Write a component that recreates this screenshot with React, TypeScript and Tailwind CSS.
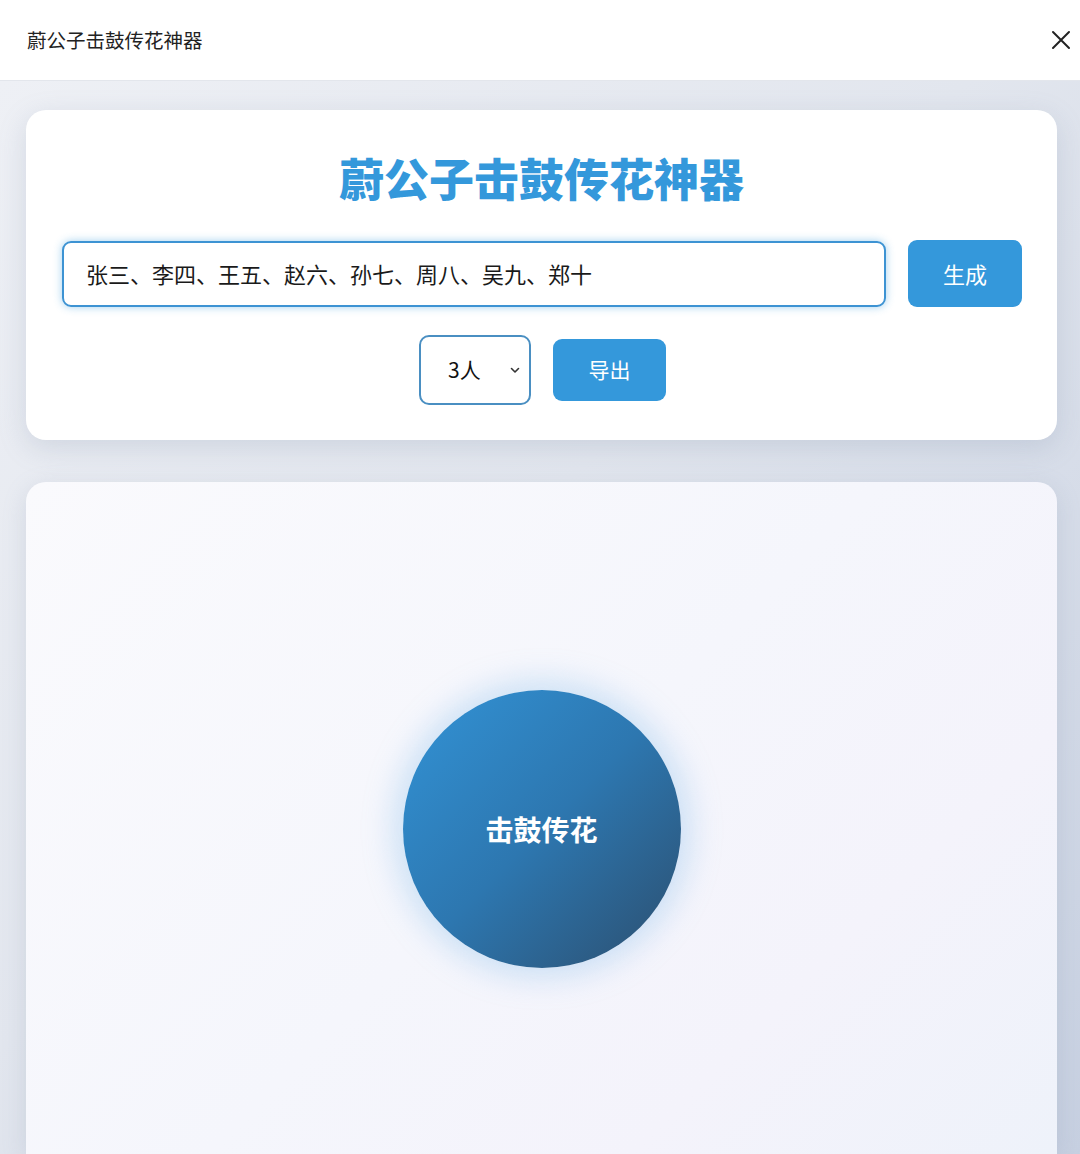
import React from "react";

const FONT = "font-['Microsoft_YaHei','Noto_Sans_CJK_SC','Noto_Sans',sans-serif]";

export default function App() {
  return (
    <div className={`w-[1080px] h-[1154px] overflow-hidden flex flex-col ${FONT}`}>
      <header className="h-[81px] shrink-0 bg-white border-b border-[#e3e6ec] flex items-center justify-between pl-[27px] pr-[8px]">
        <span className="text-[19.5px] text-[#222]">蔚公子击鼓传花神器</span>
        <svg width="22" height="22" viewBox="0 0 22 22" fill="none" stroke="#222" strokeWidth="2" strokeLinecap="round">
          <path d="M3 3 L19 19 M19 3 L3 19" />
        </svg>
      </header>
      <main className="flex-1 bg-[linear-gradient(135deg,#eef0f5_0%,#e2e6ee_45%,#c7d0e1_100%)] pl-[26px] pr-[23px] pt-[29px] flex flex-col gap-[42px]">
        <section className="h-[330px] bg-white rounded-[20px] shadow-[0_8px_28px_rgba(120,135,165,0.22)] flex flex-col items-center pt-[46px]">
          <h1 className="text-[45px] leading-[44px] font-extrabold text-[#3498db]">蔚公子击鼓传花神器</h1>
          <div className="mt-[40px] w-full flex items-center pl-[36px] pr-[35px] gap-[22px]">
            <div className="flex-1 h-[66px] rounded-[9px] border-2 border-[#3d93d3] shadow-[0_0_8px_rgba(52,152,219,0.45)] flex items-center pl-[22px] text-[22px] text-[#1a1a1a]">
              张三、李四、王五、赵六、孙七、周八、吴九、郑十
            </div>
            <button className="w-[114px] h-[67px] rounded-[9px] bg-[#3498db] text-white text-[22px]">生成</button>
          </div>
          <div className="mt-[28px] flex items-center gap-[22px] ml-[2px]">
            <div className="w-[112px] h-[70px] rounded-[10px] border-2 border-[#4a8fc2] flex items-center pl-[27px] pr-[8px] justify-between text-[21px] text-[#111]">
              <span>3人</span>
              <svg width="12" height="12" viewBox="0 0 12 12" fill="none" stroke="#333" strokeWidth="1.6" strokeLinecap="round" strokeLinejoin="round">
                <path d="M2.5 4.5 L6 8 L9.5 4.5" />
              </svg>
            </div>
            <button className="w-[113px] h-[62px] rounded-[9px] bg-[#3498db] text-white text-[21px]">导出</button>
          </div>
        </section>
        <section className="flex-1 rounded-t-[20px] bg-[linear-gradient(135deg,#fafafd_0%,#f5f6fc_50%,#f4f3fb_75%,#eef2fa_100%)] shadow-[0_6px_24px_rgba(120,135,165,0.2)] flex justify-center pt-[208px]">
          <div className="w-[278px] h-[278px] rounded-full bg-[linear-gradient(135deg,#3293d6_0%,#2d77b0_50%,#2c4e6e_100%)] shadow-[0_0_30px_10px_rgba(130,185,235,0.35)] flex items-center justify-center">
            <span className="text-white text-[28px] font-bold">击鼓传花</span>
          </div>
        </section>
      </main>
    </div>
  );
}
